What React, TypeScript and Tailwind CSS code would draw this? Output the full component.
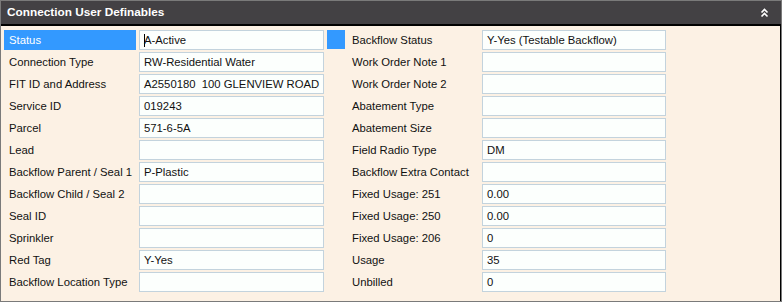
import React from "react";

const left: [string, string][] = [
  ["Status", "A-Active"],
  ["Connection Type", "RW-Residential Water"],
  ["FIT ID and Address", "A2550180  100 GLENVIEW ROAD"],
  ["Service ID", "019243"],
  ["Parcel", "571-6-5A"],
  ["Lead", ""],
  ["Backflow Parent / Seal 1", "P-Plastic"],
  ["Backflow Child / Seal 2", ""],
  ["Seal ID", ""],
  ["Sprinkler", ""],
  ["Red Tag", "Y-Yes"],
  ["Backflow Location Type", ""],
];

const right: [string, string][] = [
  ["Backflow Status", "Y-Yes (Testable Backflow)"],
  ["Work Order Note 1", ""],
  ["Work Order Note 2", ""],
  ["Abatement Type", ""],
  ["Abatement Size", ""],
  ["Field Radio Type", "DM"],
  ["Backflow Extra Contact", ""],
  ["Fixed Usage: 251", "0.00"],
  ["Fixed Usage: 250", "0.00"],
  ["Fixed Usage: 206", "0"],
  ["Usage", "35"],
  ["Unbilled", "0"],
];

function Box({ value, caret }: { value: string; caret?: boolean }) {
  return (
    <div className="h-[20px] border border-[#c3d3dd] bg-[#fcfffd] flex items-center pl-[4px] whitespace-pre text-[#111]">
      {caret && <span className="inline-block w-px h-[13px] bg-black mr-[-1px]" />}
      {value}
    </div>
  );
}

export default function App() {
  return (
    <div
      className="w-[782px] h-[302px] border border-[#7a7a7a] bg-[#fcf1e4] flex flex-col"
      style={{ fontFamily: '"Liberation Sans", Arial, sans-serif' }}
    >
      <div className="h-[25px] bg-[#434144] border-b-2 border-black flex items-center justify-between pl-[6px] pr-[12px]">
        <span className="text-white font-bold text-[11.8px]">Connection User Definables</span>
        <svg width="9" height="10" viewBox="0 0 9 10" className="mt-[1px]">
          <path d="M1.5 4.5 L4.5 1.5 L7.5 4.5 M1.5 8.5 L4.5 5.5 L7.5 8.5" stroke="white" strokeWidth="1.6" fill="none" />
        </svg>
      </div>
      <div className="flex-1 border-r border-black flex pl-[3px] pt-[4px] text-[11.3px]">
        <div className="flex flex-col gap-[2px] w-[321px]">
          {left.map(([l, v], i) => (
            <div key={l} className="grid grid-cols-[135px_185px] h-[20px]">
              <div
                className={
                  "flex items-center pl-[5px] whitespace-nowrap " +
                  (i === 0 ? "bg-[#3399ff] text-white mr-[3px]" : "text-[#111]")
                }
              >
                {l}
              </div>
              <Box value={v} caret={i === 0} />
            </div>
          ))}
        </div>
        <div className="w-[18px] h-[19px] bg-[#3399ff] ml-[2px]" />
        <div className="flex flex-col gap-[2px] ml-[7px]">
          {right.map(([l, v]) => (
            <div key={l} className="grid grid-cols-[130px_184px] h-[20px]">
              <div className="flex items-center whitespace-nowrap text-[#111]">{l}</div>
              <Box value={v} />
            </div>
          ))}
        </div>
      </div>
    </div>
  );
}
